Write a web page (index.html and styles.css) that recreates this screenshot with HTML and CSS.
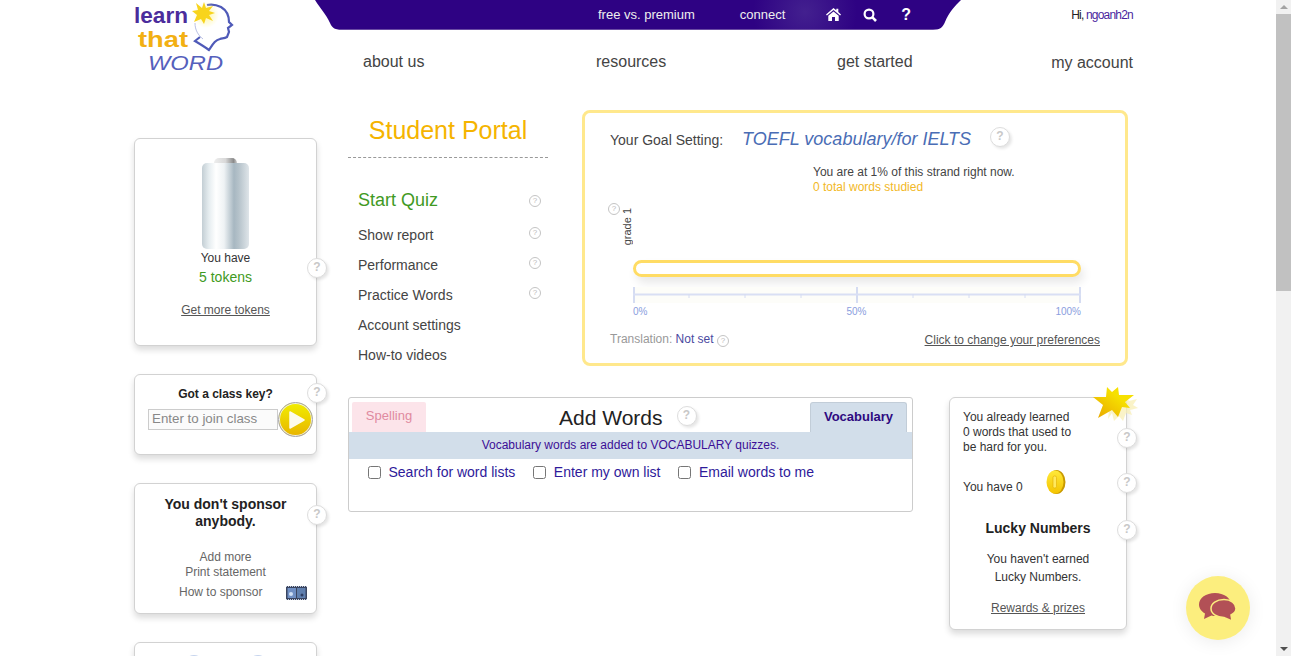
FILE: index.html
```html
<!DOCTYPE html>
<html lang="en">
<head>
	<meta charset="UTF-8">
	<title>Learn That Word - Student Portal</title>
	<link rel="stylesheet" href="styles.css">
</head>
<body>

<div class="page">

	<div class="header">
		<a class="logo" href="#">
			<svg width="100" height="75" viewBox="0 0 100 75">
				<defs>
					<radialGradient id="halo"><stop offset="0" stop-color="#fff6a0"/><stop offset="1" stop-color="#fff6a0" stop-opacity="0"/></radialGradient>
				</defs>
				<path d="M73 5C78 4 83 5 87 7C92 10 95 15 95 22L98 25 94 28 95 32 93 37C90 39 88 38 86 39 81 40 79 44 75 50 71 47 66 44 61 41L66 37" fill="none" stroke="#4f5ab8" stroke-width="2.200"/>
				<path d="M61 23C61 30 64 35 69 39" fill="none" stroke="#b9c0e4" stroke-width="1"/>
				<circle cx="72" cy="15" r="13" fill="url(#halo)"/>
				<polygon points="58,11 64,10 62,3 68,8 70,2 72,8 79,6 75,11 81,13 75,15 79,21 72,18 70,24 67,19 60,22 63,15" fill="#f8d41c"/>
				<text x="0" y="22.500" class="logo-learn" textLength="54" lengthAdjust="spacingAndGlyphs">learn</text>
				<text x="4" y="47.300" class="logo-that" textLength="50" lengthAdjust="spacingAndGlyphs">that</text>
				<text x="14" y="70" class="logo-word" textLength="75" lengthAdjust="spacingAndGlyphs">WORD</text>
			</svg>
		</a>
		<div class="head-main">
			<div class="top-line">
				<div class="purple-bar">
					<a href="#">free vs. premium</a>
					<a href="#">connect</a>
					<span class="bar-icons">
						<svg width="15" height="13" viewBox="0 0 15 13"><path d="M7.500 0L0 6.400l.9 1L7.500 1.900l6.600 5.500.9-1L12.300 4V.7h-2v1.600z" fill="#fff"/><path d="M2.300 7.700L7.500 3.400l5.200 4.300V13H9V9H6v4H2.300z" fill="#fff"/></svg>
						<svg width="14" height="14" viewBox="0 0 14 14"><circle cx="6" cy="6" r="4.400" fill="none" stroke="#fff" stroke-width="2.200"/><path d="M9.200 9.200L13 13" stroke="#fff" stroke-width="2.600"/></svg>
						<b>?</b>
					</span>
				</div>
				<div class="hi">Hi, <a href="#">ngoanh2n</a></div>
			</div>
			<div class="main-nav">
				<a href="#">about us</a>
				<a href="#">resources</a>
				<a href="#">get started</a>
				<a href="#" class="account">my account</a>
			</div>
		</div>
	</div>

	<div class="content">

		<div class="left-col">
			<div class="card tokens">
				<div class="battery-cap"></div>
				<div class="battery"></div>
				<div class="have">You have</div>
				<div class="count">5 tokens</div>
				<a class="more" href="#">Get more tokens</a>
				<span class="help help-tokens">?</span>
			</div>

			<div class="card classkey">
				<div class="key-title">Got a class key?</div>
				<div class="key-row">
					<input type="text" placeholder="Enter to join class">
					<span class="play"><svg width="16" height="18" viewBox="0 0 16 18"><polygon points="1,1 15,9 1,17" fill="#fff" stroke="#fff" stroke-width="1.500" stroke-linejoin="round" opacity=".92"/></svg></span>
				</div>
				<span class="help help-key">?</span>
			</div>

			<div class="card sponsor">
				<div class="sponsor-title">You don't sponsor<br>anybody.</div>
				<div class="sponsor-links">Add more<br>Print statement</div>
				<div class="sponsor-row">
					<span>How to sponsor</span>
					<svg width="21" height="14" viewBox="0 0 21 14"><rect width="21" height="14" fill="#3a4560"/><rect x="1.500" y="2" width="8.500" height="10" fill="#6f8fc4"/><rect x="11" y="2" width="8.500" height="10" fill="#5f7fae"/><circle cx="5" cy="8" r="2" fill="#cfe0f6"/><circle cx="16" cy="9" r="1.500" fill="#2f3f63"/><path d="M0 .5h21M0 13.500h21" stroke="#c6cede" stroke-dasharray="1 1"/></svg>
				</div>
				<span class="help help-sponsor">?</span>
			</div>

			<div class="card extra">
				<span class="blue-dot"></span>
				<span class="blue-dot"></span>
			</div>
		</div>

		<div class="center-col">
			<div class="top-row">
				<div class="portal">
					<h1>Student Portal</h1>
					<ul class="menu">
						<li class="quiz"><a href="#">Start Quiz</a><span class="help-sm">?</span></li>
						<li><a href="#">Show report</a><span class="help-sm">?</span></li>
						<li><a href="#">Performance</a><span class="help-sm">?</span></li>
						<li><a href="#">Practice Words</a><span class="help-sm">?</span></li>
						<li><a href="#">Account settings</a></li>
						<li><a href="#">How-to videos</a></li>
					</ul>
				</div>

				<div class="goal">
					<div class="goal-head">
						<span class="goal-label">Your Goal Setting:</span>
						<span class="goal-name">TOEFL vocabulary/for IELTS</span>
						<span class="help help-goal">?</span>
					</div>
					<div class="status">
						You are at 1% of this strand right now.<br>
						<span>0 total words studied</span>
					</div>
					<div class="grade">
						<span class="help-sm">?</span>
						<span class="grade-text">grade 1</span>
					</div>
					<div class="progress"></div>
					<svg class="axis" width="448" height="16" viewBox="0 0 448 16">
						<rect x="0" y="0" width="448" height="16" fill="#fdfdf9"/>
						<path d="M1 0v16M224 0v16M447 0v16" stroke="#d5dcf2" stroke-width="2"/>
						<path d="M0 7.500h448" stroke="#d9dff4" stroke-width="2"/>
						<path d="M56 7v4M112 7v4M168 7v4M280 7v4M336 7v4M392 7v4" stroke="#d5dcf2"/>
					</svg>
					<div class="scale"><span>0%</span><span class="mid">50%</span><span>100%</span></div>
					<div class="goal-foot">
						<span class="translation">Translation: <a href="#">Not set</a> <span class="help-sm">?</span></span>
						<a class="prefs" href="#">Click to change your preferences</a>
					</div>
				</div>
			</div>

			<div class="bottom-row">
				<div class="words">
					<div class="tabs">
						<a class="tab spelling" href="#">Spelling</a>
						<div class="words-title">Add Words</div>
						<span class="help">?</span>
						<a class="tab vocab" href="#">Vocabulary</a>
					</div>
					<div class="band">Vocabulary words are added to VOCABULARY quizzes.</div>
					<div class="checks">
						<label><input type="checkbox">Search for word lists</label>
						<label><input type="checkbox">Enter my own list</label>
						<label><input type="checkbox">Email words to me</label>
					</div>
				</div>

				<div class="card rewards">
					<div>You already learned<br>0 words that used to<br>be hard for you.</div>
					<div class="coins">
						<span class="coins-text">You have 0</span>
						<svg width="20" height="24" viewBox="0 0 20 24">
							<defs><linearGradient id="coinfill" x1="0" y1="0" x2="0" y2="1"><stop offset="0" stop-color="#ffe93a"/><stop offset="1" stop-color="#f4c400"/></linearGradient></defs>
							<ellipse cx="10.500" cy="12" rx="9" ry="12" fill="#c99a00"/>
							<ellipse cx="9" cy="12" rx="8.500" ry="11.500" fill="url(#coinfill)"/>
							<rect x="7" y="6" width="3.500" height="12" rx="1.500" fill="#ffe95e" stroke="#e0ac00" stroke-width=".6"/>
						</svg>
					</div>
					<div class="lucky">Lucky Numbers</div>
					<div class="lucky-text">You haven't earned<br>Lucky Numbers.</div>
					<a class="more" href="#">Rewards &amp; prizes</a>

					<svg class="star" width="45" height="37" viewBox="0 0 45 37">
						<defs><linearGradient id="starfill" x1="0" y1="1" x2="1" y2="0"><stop offset="0" stop-color="#e8a400"/><stop offset=".65" stop-color="#f6e000"/></linearGradient></defs>
						<polygon points="24,14 33,10 36,15 44,13 40,19 45,22 37,24 39,29 33,27 30,35 26,30 21,35 19,27 15,33 16,24" fill="#f8eeb0" opacity=".7"/>
						<polygon points="0,11 13,11 14,1 19,6 25,1 26,9 41,9 32,16 37,22 29,21 25,31 19,24 5,32 10,19" fill="url(#starfill)"/>
					</svg>
					<span class="help help-r1">?</span>
					<span class="help help-r2">?</span>
					<span class="help help-r3">?</span>
				</div>
			</div>
		</div>

	</div>
</div>

<a class="chat" href="#">
	<svg width="38" height="30" viewBox="0 0 38 30">
		<path d="M16 0C7 0 0 5 0 11.500C0 15.500 2.500 18.500 6 20.500L5 26 12.500 22.500C14 23 15 23 16 23 25 23 32 18 32 11.500 32 5 25 0 16 0Z" fill="#b25056"/>
		<path d="M25 6.500C17.500 6.500 12 10.500 12 15.500 12 20.500 17.500 24.500 25 24.500L33 28 32 22C35 20.500 37 18.500 37 15.500 37 10.500 32 6.500 25 6.500Z" fill="#b25056" stroke="#fcee7e" stroke-width="1.500"/>
	</svg>
</a>

<div class="scrollbar">
	<span class="arrow-up"></span>
	<span class="thumb"></span>
	<span class="arrow-down"></span>
</div>

</body>
</html>
```

FILE: styles.css
```css
*{box-sizing: border-box;}
html,body{height: 656px;overflow: hidden;}
body{margin: 0;background: #fff;font-family: "Liberation Sans", Arial, sans-serif;font-size: 12px;color: #333;}
a{color: inherit;text-decoration: none;}
ul,h1{margin: 0;padding: 0;}

.page{width: 1000px;margin-left: 134px;}

/* header */
.header{display: flex;height: 110px;}
.logo{display: block;width: 181px;height: 75px;flex: none;}
.logo text{font-family: "Liberation Sans", sans-serif;font-weight: 700;font-size: 22px;}
.logo .logo-learn{fill: #4b2c9c;}
.logo .logo-that{fill: #f2b013;}
.logo .logo-word{font-weight: 400;font-style: italic;font-size: 19.500px;fill: #5560bc;}
.head-main{flex: 1;padding-right: 1px;}
.top-line{display: flex;justify-content: space-between;}
.purple-bar{display: flex;align-items: center;width: 646px;height: 30px;padding-left: 283px;background: radial-gradient(circle at 490px 12px, #43208f 0, #2e0283 52px);border-bottom: 1px solid #6a4ba3;color: #eee;font-size: 13px;clip-path: path("M0 0C5 8 11 14 15 23C17 28 21 30 26 30L618 30C625 30 628 27 630 22C634 12 640 6 646 0Z");}
.purple-bar a{margin-right: 45px;}
.bar-icons{display: flex;align-items: center;gap: 22px;margin-left: -4px;}
.bar-icons b{color: #fff;font-size: 16px;margin-left: 2px;}
.hi{padding-top: 8px;font-size: 12px;letter-spacing: -.8px;color: #222;}
.hi a{color: #4a1f9e;}
.main-nav{display: grid;grid-template-columns: 233px 241px 1fr auto;margin-top: 23px;padding-left: 48px;font-size: 16px;line-height: 18px;color: #444;}
.main-nav .account{margin-top: 1px;}

.content{display: flex;gap: 31px;}

/* left cards */
.left-col{width: 183px;flex: none;padding-top: 28px;display: flex;flex-direction: column;gap: 28px;}
.card{position: relative;background: #fff;border: 1px solid #d2d2d2;border-radius: 6px;box-shadow: 0 4px 6px rgba(0,0,0,.14);}
.help{display: block;flex: none;width: 20px;height: 20px;border: 1px solid #ddd;border-radius: 50%;background: #fff;color: #c8c8c8;font-size: 12px;font-weight: bold;line-height: 17px;text-align: center;box-shadow: 2px 2px 3px rgba(0,0,0,.1);}
.help-sm{display: inline-block;width: 12px;height: 12px;border: 1px solid #c4c4c4;border-radius: 50%;color: #bbb;font-size: 8px;line-height: 10px;text-align: center;}
.help-tokens,.help-key,.help-sponsor,.help-r1,.help-r2,.help-r3{position: absolute;right: -11px;}
.help-tokens{top: 119px;}
.help-key{top: 8px;}
.help-sponsor{top: 21px;}
.help-r1{top: 30px;}
.help-r2{top: 75px;}
.help-r3{top: 122px;}

.tokens{height: 208px;padding-top: 19px;text-align: center;}
.battery-cap{width: 23px;height: 5px;margin: 0 auto;border-radius: 5px 5px 0 0;background: linear-gradient(90deg, #eee, #d8d8d8 50%, #8b8b8b 85%, #ccc);}
.battery{width: 47px;height: 86px;margin: 0 auto;border-radius: 5px;background: linear-gradient(90deg, #c3ced4, #e6edf0 15%, #fff 30%, #eef2f4 47%, #a7b7c1 68%, #b5c2ca 78%, #dfe5e9);}
.have{margin-top: 2px;line-height: 15px;}
.count{margin-top: 1px;font-size: 14px;line-height: 20px;color: #3f9a23;}
.more{display: block;margin-top: 15px;line-height: 15px;color: #555;text-decoration: underline;text-align: center;}
.tokens .more{margin-top: 16px;}

.classkey{height: 81px;padding: 12px 0 0 13px;}
.key-title{font-weight: bold;line-height: 15px;text-align: center;margin-left: -13px;color: #222;}
.key-row{display: flex;align-items: center;height: 35px;}
.key-row input{width: 130px;height: 21px;padding: 0 3px 2px;border: 1px solid #ccc;background: #fbfbfb;font: 13.333px "Liberation Sans", sans-serif;outline: none;}
.key-row input::placeholder{color: #888;opacity: 1;}
.play{display: flex;align-items: center;justify-content: center;width: 35px;height: 35px;border-radius: 50%;border: 1px solid #aaa;background: linear-gradient(#f1ee00, #e8b400);padding-left: 3px;box-shadow: 0 0 0 1px #eee inset;}

.sponsor{height: 131px;padding-top: 12px;text-align: center;color: #666;}
.sponsor-title{font-size: 14px;font-weight: bold;line-height: 17px;color: #222;}
.sponsor-links{margin-top: 20px;line-height: 15px;}
.sponsor-row{display: flex;align-items: center;gap: 24px;margin: 5px 0 0 44px;line-height: 15px;}

.extra{height: 60px;display: flex;justify-content: center;gap: 44px;padding-top: 12px;}
.blue-dot{width: 20px;height: 20px;border-radius: 50%;background: #c6d4ee;}

/* middle */
.center-col{width: 780px;flex: none;}
.top-row{display: flex;gap: 34px;height: 256px;}
.portal{width: 200px;flex: none;}
.portal h1{height: 48px;padding-top: 5px;border-bottom: 1px dashed #999;font-size: 25px;font-weight: normal;line-height: 30px;text-align: center;color: #f5b400;}
.menu{margin-top: 30px;padding: 0 7px 0 10px;list-style: none;font-size: 14px;line-height: 30px;color: #444;}
.menu li{display: flex;justify-content: space-between;align-items: flex-start;}
.menu li .help-sm{margin-top: 7px;}
.menu .quiz{height: 24px;margin-bottom: 8px;font-size: 18px;line-height: 24px;color: #3f9a23;}
.menu .quiz .help-sm{margin-top: 7px;}

.goal{width: 546px;height: 256px;padding: 15px 25px 0;border: 3px solid #ffe88c;border-radius: 8px;}
.goal-head{display: flex;align-items: center;height: 22px;}
.goal-label{width: 132px;padding-top: 2px;font-size: 14px;color: #444;}
.goal-name{width: 248px;font-size: 18px;font-style: italic;color: #4a6db5;}
.help-goal{margin-top: -5px;}
.status{margin: 15px 0 0 203px;line-height: 15px;color: #444;}
.status span{color: #f2b827;}
.grade{display: flex;align-items: flex-start;height: 43px;margin: 8px 0 0 -2px;}
.grade-text{writing-mode: vertical-rl;transform: rotate(180deg);margin: 5px 0 0 1px;font-size: 11px;line-height: 12px;color: #444;}
.progress{width: 448px;height: 17px;margin: 14px 0 0 23px;border: 3px solid #ffdc64;border-radius: 9px;background: #fff;box-shadow: 3px 6px 10px rgba(0,0,0,.09);}
.axis{display: block;margin: 10px 0 0 23px;}
.scale{display: flex;justify-content: space-between;width: 448px;margin: 3px 0 0 23px;font-size: 10px;line-height: 12px;color: #8a9ede;}
.scale .mid{margin-left: 10px;}
.goal-foot{display: flex;justify-content: space-between;align-items: center;margin-top: 13px;line-height: 15px;}
.translation{color: #999;}
.translation a{color: #4a4a9f;}
.translation .help-sm{margin-left: 0;vertical-align: 0;}
.prefs{margin-top: 2px;color: #555;text-decoration: underline;}

/* bottom */
.bottom-row{display: flex;align-items: flex-start;gap: 36px;margin-top: 31px;}
.words{width: 565px;height: 115px;border: 1px solid #ccc;border-radius: 3px;}
.tabs{display: flex;align-items: flex-start;height: 34px;padding: 4px 5px 0 3px;}
.tab{display: block;height: 30px;font-size: 13px;line-height: 28px;text-align: center;}
.spelling{width: 74px;background: #fce4ea;color: #e08aa0;border-radius: 2px 2px 0 0;}
.words-title{margin: 2px 14px 0 133px;font-size: 21px;line-height: 28px;color: #222;}
.tabs .help{margin-top: 4px;}
.vocab{width: 97px;margin-left: auto;background: #d2deea;border: 1px solid #c2cdd8;border-bottom: 0;border-radius: 3px 3px 0 0;font-weight: bold;color: #2e0a80;}
.band{height: 27px;background: #d2deea;line-height: 27px;text-align: center;color: #3c0f96;}
.checks{display: flex;gap: 18px;padding: 4px 0 0 19px;font-size: 14px;line-height: 18px;color: #2e1a9a;}
.checks label{display: flex;align-items: center;}
.checks input{width: 13px;height: 13px;margin: 0 7.500px 0 0;}

.rewards{width: 178px;height: 233px;padding: 12px 13px 0;line-height: 15px;}
.coins{display: flex;align-items: flex-start;gap: 23px;height: 24px;margin-top: 15px;}
.coins-text{margin-top: 10px;}
.lucky{margin-top: 24px;font-size: 14px;font-weight: bold;line-height: 20px;text-align: center;color: #222;}
.lucky-text{margin-top: 12px;line-height: 18px;text-align: center;}
.star{position: absolute;top: -12px;left: 143px;}

/* chat + scrollbar sit over the page */
.chat{position: fixed;right: 41px;bottom: 16px;display: flex;align-items: center;justify-content: center;width: 64px;height: 64px;border-radius: 50%;background: #fcee7e;box-shadow: 0 2px 18px rgba(0,0,0,.08);}
.scrollbar{position: fixed;top: 0;right: 0;bottom: 0;width: 15px;display: flex;flex-direction: column;align-items: center;background: #f1f1f1;}
.thumb{width: 15px;height: 277px;background: #c1c1c1;}
.arrow-up,.arrow-down{width: 0;height: 0;border-left: 4px solid transparent;border-right: 4px solid transparent;}
.arrow-up{margin: 5px 0 5px;border-bottom: 4px solid #a3a3a3;}
.arrow-down{margin: auto 0 5px;border-top: 4px solid #505050;}
```
